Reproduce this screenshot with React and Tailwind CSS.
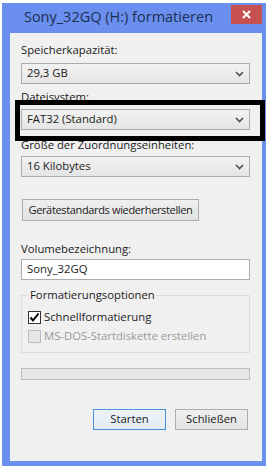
import React from 'react';

const font = "font-['Segoe_UI','Open_Sans',sans-serif]";

const Chevron = () => (
  <svg width="9" height="6" viewBox="0 0 9 6" className="shrink-0">
    <polyline points="1,1 4.5,4.5 8,1" fill="none" stroke="#505050" strokeWidth="1.6" />
  </svg>
);

const Combo = ({ value, className = '' }) => (
  <div className={`h-[21px] flex items-center justify-between pl-[5px] pr-[5px] border border-[#acacac] bg-gradient-to-b from-[#f2f2f2] to-[#e5e5e5] text-[11.3px] text-[#1a1a1a] ${className}`}>
    <span>{value}</span>
    <Chevron />
  </div>
);

const Label = ({ children, className = '' }) => (
  <div className={`h-[16px] leading-[16px] text-[11.3px] text-[#1a1a1a] whitespace-nowrap ${className}`}>{children}</div>
);

const Checkbox = ({ checked, disabled, label, className = '' }) => (
  <div className={`flex items-center h-[16px] ${className}`}>
    <div
      className={`w-[13px] h-[13px] border flex items-center justify-center ${
        disabled ? 'border-[#bcbcbc] bg-[#e6e6e6]' : 'border-[#333333] bg-white'
      }`}
    >
      {checked && (
        <svg width="11" height="11" viewBox="0 0 11 11">
          <polyline points="1.5,5.5 4,8.5 9.5,1.5" fill="none" stroke="#000" strokeWidth="2" />
        </svg>
      )}
    </div>
    <span className={`ml-[3px] text-[11.3px] leading-[16px] whitespace-nowrap ${disabled ? 'text-[#9a9a9a]' : 'text-[#1a1a1a]'}`}>{label}</span>
  </div>
);

export default function App() {
  return (
    <div className={`relative w-[269px] h-[470px] bg-white overflow-hidden ${font}`}>
      <div className="ml-[2px] mt-[3px] w-[264px] h-[463px] bg-[#6a8fee] flex flex-col">
        {/* title bar */}
        <div className="h-[30px] flex items-start">
          <div className="flex-1 h-[28px] flex items-center justify-center pl-[4px] text-[14.5px] text-[#1c2f52] whitespace-nowrap">
            Sony_32GQ (H:) formatieren
          </div>
          <div className="mt-[2px] mr-[4px] w-[31px] h-[19px] bg-[#c75050] flex items-center justify-center">
            <svg width="9" height="9" viewBox="0 0 9 9">
              <path d="M1 1 L8 8 M8 1 L1 8" stroke="#fff" strokeWidth="2" />
            </svg>
          </div>
        </div>

        {/* client */}
        <div className="ml-[8px] mr-[4px] h-[428px] bg-[#f0f0f0] pl-[11px] pr-[12px] flex flex-col">
          <Label className="mt-[9px]">Speicherkapazität:</Label>
          <Combo value="29,3 GB" className="mt-[5px]" />
          <Label className="mt-[5px]">Dateisystem:</Label>
          <Combo value="FAT32 (Standard)" className="mt-[4px]" />
          <Label className="mt-[7px]">Größe der Zuordnungseinheiten:</Label>
          <Combo value="16 Kilobytes" className="mt-[3px]" />

          <button className="mt-[22px] ml-[1px] w-[177px] h-[22px] border border-[#acacac] bg-gradient-to-b from-[#efefef] to-[#e3e3e3] text-[11px] tracking-[-0.35px] text-[#1a1a1a] whitespace-nowrap">
            Gerätestandards wiederherstellen
          </button>

          <Label className="mt-[20px]">Volumebezeichnung:</Label>
          <div className="mt-[2px] h-[21px] flex items-center pl-[5px] border border-[#abadb3] bg-white text-[11.3px] text-[#1a1a1a]">
            Sony_32GQ
          </div>

          <fieldset className="mt-[9px] border border-[#dcdcdc] pl-[6px] pb-[8px] min-w-0">
            <legend className="ml-0 px-[2px] text-[11.3px] leading-[12px] text-[#1a1a1a]">Formatierungsoptionen</legend>
            <Checkbox checked label="Schnellformatierung" className="mt-[8px]" />
            <Checkbox disabled label="MS-DOS-Startdiskette erstellen" className="mt-[3px]" />
          </fieldset>

          <div className="mt-[15px] h-[12px] border border-[#bcbcbc] bg-[#e6e6e6]" />

          <div className="mt-[29px] mr-[2px] flex justify-end gap-[9px]">
            <button className="w-[73px] h-[21px] border border-[#4a90d9] bg-gradient-to-b from-[#eef4fa] to-[#e2eaf3] text-[11.3px] text-[#1a1a1a]">
              Starten
            </button>
            <button className="w-[73px] h-[21px] border border-[#acacac] bg-gradient-to-b from-[#efefef] to-[#e3e3e3] text-[11.3px] text-[#1a1a1a]">
              Schließen
            </button>
          </div>
        </div>
      </div>

      {/* annotation frame */}
      <div className="absolute left-[15px] top-[100px] w-[250px] h-[41px] border-[5px] border-black" />
    </div>
  );
}
